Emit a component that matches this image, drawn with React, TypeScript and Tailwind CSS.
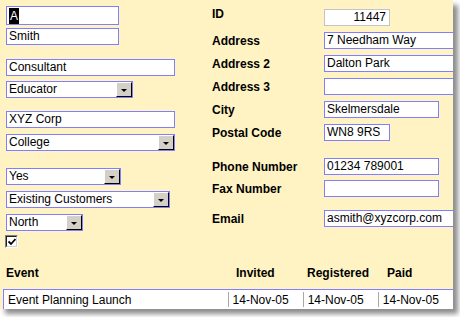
import React from 'react';

const FONT = "font-['Liberation_Sans',Arial,sans-serif]";

function TextBox({ value, w, h = 'h-[17px]', align = 'left', gray = false }: { value?: React.ReactNode; w: string; h?: string; align?: 'left' | 'right'; gray?: boolean }) {
  return (
    <div
      className={`${w} ${h} shrink-0 flex items-center bg-white border ${gray ? 'border-[#c4c4c4]' : 'border-[#8080ff]'} ${align === 'right' ? 'justify-end pr-[3px]' : 'pl-[2px]'} text-[12px] leading-[15px] text-black whitespace-nowrap overflow-hidden`}
    >
      {value}
    </div>
  );
}

function DropDown({ value, w }: { value: string; w: string }) {
  return (
    <div className={`${w} h-[17px] shrink-0 flex bg-white border border-[#8080ff] text-[12px] leading-[15px] text-black`}>
      <span className="flex-1 pl-[2px] whitespace-nowrap overflow-hidden">{value}</span>
      <span className="w-[16px] h-[15px] flex items-center justify-center bg-[#d4d0c8] border-t border-l border-t-white border-l-white border-r border-b border-r-black border-b-black">
        <span className="w-0 h-0 border-l-[3px] border-r-[3px] border-t-[3px] border-l-transparent border-r-transparent border-t-black mt-[1px]" />
      </span>
    </div>
  );
}

function Field({ label, mt, children }: { label: string; mt: string; children: React.ReactNode }) {
  return (
    <div className={`flex items-center h-[17px] ${mt}`}>
      <span className="w-[112px] shrink-0 text-[12px] font-bold text-black whitespace-nowrap">{label}</span>
      {children}
    </div>
  );
}

export default function App() {
  return (
    <div className={`bg-white w-[460px] h-[317px] ${FONT}`}>
      <div className="w-[453px] h-[309px] bg-[#fff3c3] overflow-hidden flex flex-col shadow-[5px_5px_5px_rgba(0,0,0,0.45)]">
        <div className="flex h-[265px]">
          {/* left column */}
          <div className="w-[212px] shrink-0 pl-[6px] pt-[6px] flex flex-col items-start">
            <TextBox
              w="w-[113px]"
              h="h-[19px]"
              value={<span className="bg-black text-white px-[1px] leading-[16px]">A</span>}
            />
            <div className="mt-[3px]"><TextBox w="w-[113px]" value="Smith" /></div>
            <div className="mt-[14px]"><TextBox w="w-[169px]" value="Consultant" /></div>
            <div className="mt-[5px]"><DropDown w="w-[127px]" value="Educator" /></div>
            <div className="mt-[13px]"><TextBox w="w-[169px]" value="XYZ Corp" /></div>
            <div className="mt-[6px]"><DropDown w="w-[169px]" value="College" /></div>
            <div className="mt-[17px]"><DropDown w="w-[115px]" value="Yes" /></div>
            <div className="mt-[6px]"><DropDown w="w-[164px]" value="Existing Customers" /></div>
            <div className="mt-[6px]"><DropDown w="w-[77px]" value="North" /></div>
            <div className="mt-[4px] -ml-[1px] w-[13px] h-[13px] bg-[#f0f0f0] border border-t-[#808080] border-l-[#808080] border-r-white border-b-white">
              <div className="w-full h-full bg-white border border-t-[#202020] border-l-[#202020] border-r-[#d4d0c8] border-b-[#d4d0c8] flex items-center justify-center">
                <svg width="8" height="8" viewBox="0 0 8 8">
                  <path d="M0.5 3.5 L3 6 L7.5 1" stroke="black" strokeWidth="1.8" fill="none" />
                </svg>
              </div>
            </div>
          </div>

          {/* right column */}
          <div className="flex flex-col pt-[9px]">
            <div className="flex items-start h-[17px]">
              <span className="w-[112px] shrink-0 text-[12px] font-bold text-black leading-[12px] mt-[-1px]">ID</span>
              <TextBox w="w-[66px]" value="11447" align="right" gray />
            </div>
            <Field label="Address" mt="mt-[6px]"><TextBox w="w-[140px]" value="7 Needham Way" /></Field>
            <Field label="Address 2" mt="mt-[6px]"><TextBox w="w-[140px]" value="Dalton Park" /></Field>
            <Field label="Address 3" mt="mt-[6px]"><TextBox w="w-[140px]" /></Field>
            <Field label="City" mt="mt-[6px]"><TextBox w="w-[115px]" value="Skelmersdale" /></Field>
            <Field label="Postal Code" mt="mt-[6px]"><TextBox w="w-[66px]" value="WN8 9RS" /></Field>
            <Field label="Phone Number" mt="mt-[17px]"><TextBox w="w-[115px]" value="01234 789001" /></Field>
            <Field label="Fax Number" mt="mt-[5px]"><TextBox w="w-[115px]" /></Field>
            <Field label="Email" mt="mt-[13px]"><TextBox w="w-[140px]" value="asmith@xyzcorp.com" /></Field>
          </div>
        </div>

        {/* table header */}
        <div className="flex h-[16px] items-center text-[12px] font-bold text-black whitespace-nowrap">
          <span className="w-[230px] pl-[6px]">Event</span>
          <span className="w-[76px] pl-[6px]">Invited</span>
          <span className="w-[76px] pl-[1px]">Registered</span>
          <span className="pl-[5px]">Paid</span>
        </div>

        {/* table row */}
        <div className="mt-[8px] ml-[3px] flex h-[20px] bg-white border-t border-l border-[#8080ff] text-[12px] text-black whitespace-nowrap">
          <span className="w-[226px] pl-[4px] flex items-center">Event Planning Launch</span>
          {['14-Nov-05', '14-Nov-05', '14-Nov-05'].map((d, i) => (
            <span key={i} className="w-[76px] flex items-center">
              <span className="w-px h-[15px] bg-[#a8a8a8]" />
              <span className="pl-[4px]">{d}</span>
            </span>
          ))}
        </div>
      </div>
    </div>
  );
}
